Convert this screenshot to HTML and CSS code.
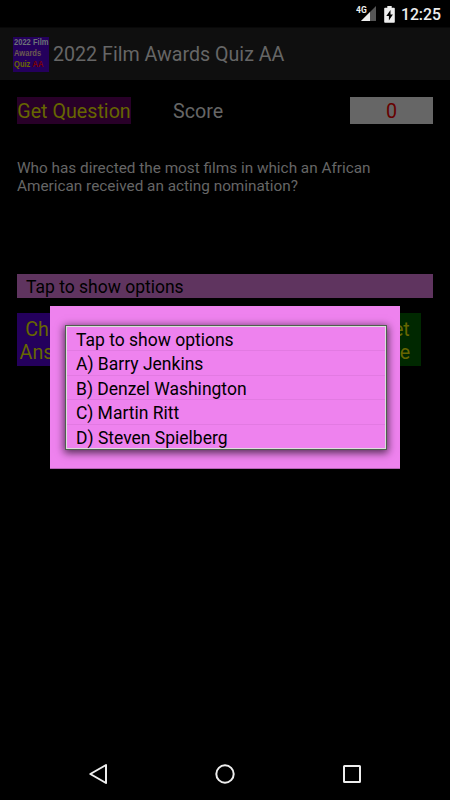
FILE: index.html
```html
<!DOCTYPE html>
<html lang="en">
<head>
<meta charset="utf-8">
<title>2022 Film Awards Quiz AA</title>
<link rel="stylesheet" href="styles.css">
</head>
<body>
<div class="screen">
  <div class="status">
    <svg class="signal" width="22" height="18" viewBox="0 0 22 18">
      <path d="M20 1v15H5z" fill="#555"/>
      <path d="M14 7v9H5z" fill="#eee"/>
      <text class="network" x="0" y="8">4G</text>
    </svg>
    <svg class="battery" width="11" height="17" viewBox="0 0 11 17">
      <path d="M3.3 0h4.4v1.8H10a.8.8 0 0 1 .8.8V16a.8.8 0 0 1-.8.8H1a.8.8 0 0 1-.8-.8V2.600A.8.8 0 0 1 1 1.800h2.300z" fill="#eee"/>
      <path d="M6.500 4 2.300 10h2.600v4.500L8.900 8.500H6.500z" fill="#000"/>
    </svg>
    <span class="clock">12:25</span>
  </div>
  <header class="bar">
    <div class="logo"><span class="silver">2022 Film</span><span class="tan">Awards</span><span class="gold">Quiz <b>AA</b></span></div>
    <h1>2022 Film Awards Quiz AA</h1>
  </header>
  <main>
    <div class="top">
      <button class="question-btn">Get Question</button>
      <span class="score-label">Score</span>
      <span class="score">0</span>
    </div>
    <p class="question">Who has directed the most films in which an African<br>American received an acting nomination?</p>
    <div class="spinner">Tap to show options</div>
    <div class="actions">
      <button class="check">Check<br>Answer</button>
      <button class="reset">Reset<br>Score</button>
    </div>
  </main>
  <nav>
    <svg width="20" height="22" viewBox="0 0 20 22"><path d="M18 2 2.300 11 18 20z" fill="none" stroke="#eee" stroke-width="2" stroke-linejoin="round"/></svg>
    <svg width="20" height="22" viewBox="0 0 20 22"><circle cx="10" cy="11" r="8.700" fill="none" stroke="#eee" stroke-width="2"/></svg>
    <svg width="20" height="22" viewBox="0 0 20 22"><rect x="2" y="3" width="16" height="16" rx=".5" fill="none" stroke="#eee" stroke-width="2"/></svg>
  </nav>
  <div class="dialog">
    <ul>
      <li>Tap to show options</li>
      <li>A) Barry Jenkins</li>
      <li>B) Denzel Washington</li>
      <li>C) Martin Ritt</li>
      <li>D) Steven Spielberg</li>
    </ul>
  </div>
</div>
</body>
</html>
```

FILE: styles.css
```css
* { box-sizing: border-box; }
body { margin: 0; background: #000; font-family: Roboto, sans-serif; }
button { border: 0; padding: 0; font: inherit; text-align: center; }
.screen { position: relative; width: 450px; height: 800px; display: flex; flex-direction: column; overflow: hidden; background: #000; }
.status { height: 27px; display: flex; align-items: center; justify-content: flex-end; padding-right: 9px; color: #eee; }
.signal { margin: 1px 6px 0 0; }
.network { font-size: 8.500px; font-weight: 700; fill: #eee; }
.battery { margin: 1px 6px 0 0; }
.clock { font-size: 15.800px; font-weight: 500; line-height: 27px; padding-top: 2px; }
.bar { height: 53px; display: flex; align-items: center; gap: 4px; padding-left: 13px; background: #0f0f0f; border-top: 1px solid #080808; }
.logo { width: 36px; height: 35px; background: #24005c; padding: 0 0 0 1px; display: flex; flex-direction: column; font: bold 9px/11.300px "Liberation Sans", sans-serif; white-space: nowrap; }
.logo span { transform: scaleX(.84); transform-origin: left; }
.silver { color: #6b7377; }
.tan { color: #6b5b50; }
.gold { color: #696900; }
.gold b { color: #800000; }
h1 { margin: 0; padding-top: 1px; font-size: 19.650px; font-weight: 400; color: #666; white-space: nowrap; }
main { flex: 1; padding: 17px 17px 0; }
.top { display: flex; height: 27px; line-height: 30px; font-size: 19.700px; }
.question-btn { width: 114px; background: #280028; color: #666600; white-space: nowrap; line-height: 30px; }
.score-label { margin-left: 42px; color: #666; }
.score { width: 83px; margin-left: auto; background: #666; color: #660000; text-align: center; }
.question { margin: 35px 0 0; height: 115px; color: #666; font-size: 15.330px; line-height: 18px; white-space: nowrap; }
.spinner { height: 24px; padding-left: 9px; background: #5f345f; color: #000; font-size: 17.500px; line-height: 26px; }
.actions { display: flex; justify-content: space-between; margin: 15px 12px 0 0; }
.actions button { height: 53px; padding-top: 3px; font-size: 19.700px; line-height: 23px; color: #666600; }
.actions .check { width: 71px; background: #24005c; }
.actions .reset { width: 72px; background: #002800; }
nav { height: 53px; display: flex; justify-content: space-between; align-items: center; padding: 0 88px; }
.dialog { position: absolute; left: 50px; top: 306px; width: 350px; height: 163px; padding: 19px 13px 18px 15px; background: #ee82ee; border-bottom: 1px solid #b463b4; }
.dialog ul { list-style: none; margin: 0; padding: 1px 0 0; height: 125px; border: 1px solid #4f5f4f; box-shadow: inset 0 0 0 1px #ddd, 0 2px 8px 1px rgba(0,0,0,.65); }
.dialog li { height: 24.400px; padding-left: 9px; margin: 0 1px; font-size: 17.500px; line-height: 27px; color: #000; border-bottom: 1px solid #e27ae2; }
.dialog li:last-child { border: 0; }
```
